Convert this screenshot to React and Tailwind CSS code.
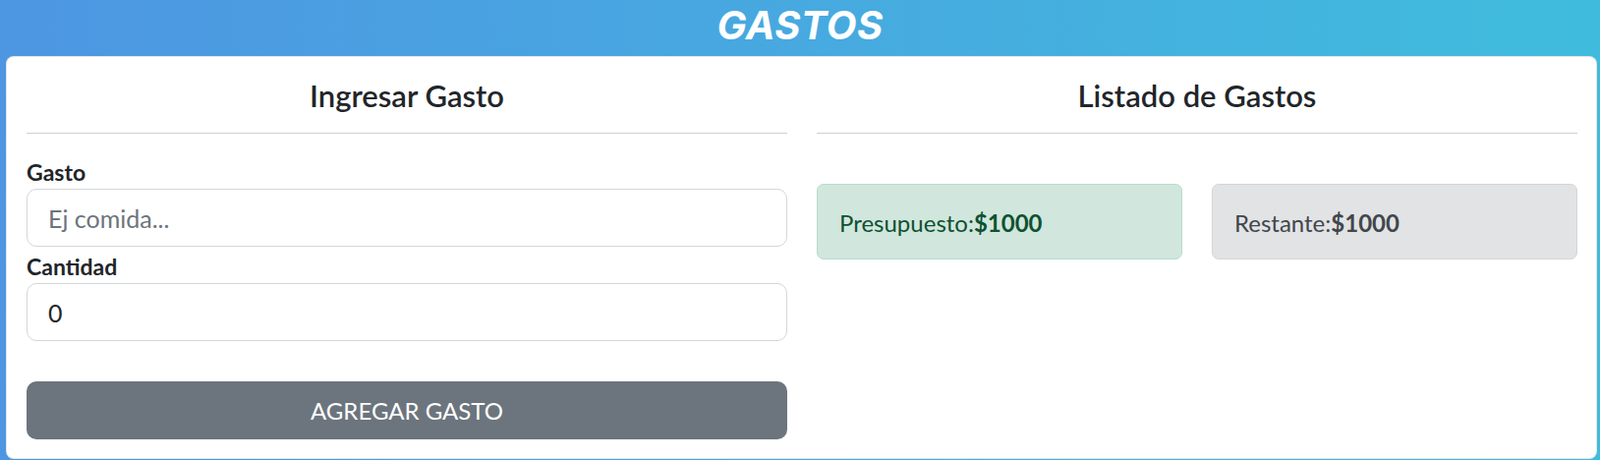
const body = { fontFamily: '"Lato", "Noto Sans", sans-serif' };

const Field = ({ label, placeholder, value, first }) => (
  <div className={first ? "mt-[24px]" : "mt-[5px]"}>
    <label className="block text-[23px] font-bold leading-[30px] text-[#212529]">{label}</label>
    <input
      readOnly
      value={value}
      placeholder={placeholder}
      className="mt-[2px] block h-[59px] w-full rounded-[10px] border border-[#d3d7dc] bg-white px-[21px] text-[25px] text-[#212529] outline-none placeholder:text-[#6c757d]"
    />
  </div>
);

const Heading = ({ children }) => (
  <>
    <h2 className="mt-[21px] text-center text-[31px] font-semibold leading-[37px] text-[#212529]">{children}</h2>
    <hr className="mt-[19px] border-0 border-t border-[#cfcfcf]" />
  </>
);

export default function App() {
  return (
    <div style={body} className="h-[468px] w-full overflow-hidden bg-linear-to-r from-[#4d96e2] to-[#3fbcdd]">
      <header className="flex h-[57px] items-center justify-center">
        <h1
          style={{ fontFamily: '"Inter", sans-serif' }}
          className="-mt-[6px] text-[40px] font-bold italic leading-none tracking-[0.01em] text-white"
        >
          GASTOS
        </h1>
      </header>

      <main className="ml-[6px] flex h-[410px] w-[1619px] gap-[30px] rounded-[8px] border border-black/10 bg-white pl-[20px] pr-[19px]">
        <section className="w-[774px]">
          <Heading>Ingresar Gasto</Heading>
          <Field first label="Gasto" placeholder="Ej comida..." value="" />
          <Field label="Cantidad" value="0" />
          <button className="mt-[41px] h-[59px] w-full rounded-[10px] bg-[#6c757d] text-[24px] uppercase text-white">
            Agregar Gasto
          </button>
        </section>

        <section className="w-[774px]">
          <Heading>Listado de Gastos</Heading>
          <div className="mt-[51px] grid grid-cols-2 gap-[30px]">
            <div className="flex h-[77px] items-center rounded-[7px] border border-[#badbcc] bg-[#d1e7dd] px-[22px] pt-[3px] text-[24px] text-[#0f5132]">
              Presupuesto:<span className="font-bold">$1000</span>
            </div>
            <div className="flex h-[77px] items-center rounded-[7px] border border-[#d3d6d8] bg-[#e2e3e5] px-[22px] pt-[3px] text-[24px] text-[#41464b]">
              Restante:<span className="font-bold">$1000</span>
            </div>
          </div>
        </section>
      </main>
    </div>
  );
}
